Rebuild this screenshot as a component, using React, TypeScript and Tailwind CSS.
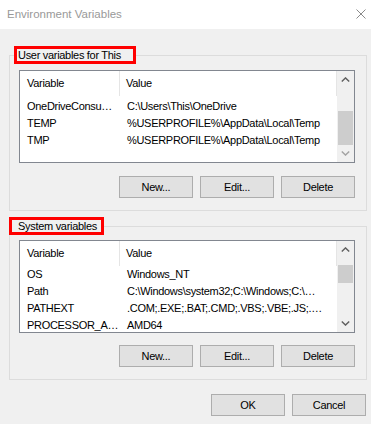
import { ReactNode } from "react"

type Row = [string, string]

const userRows: Row[] = [
    ["OneDriveConsu…", "C:\\Users\\This\\OneDrive"],
    ["TEMP", "%USERPROFILE%\\AppData\\Local\\Temp"],
    ["TMP", "%USERPROFILE%\\AppData\\Local\\Temp"],
]

const systemRows: Row[] = [
    ["OS", "Windows_NT"],
    ["Path", "C:\\Windows\\system32;C:\\Windows;C:\\…"],
    ["PATHEXT", ".COM;.EXE;.BAT;.CMD;.VBS;.VBE;.JS;.…"],
    ["PROCESSOR_A…", "AMD64"],
]

const Chevron = ({ down, light }: { down?: boolean; light?: boolean }) => (
    <svg width="9" height="5" viewBox="0 0 9 5" className={down ? "rotate-180" : ""}>
        <path d="M0.8 4.5 L4.5 0.9 L8.2 4.5" fill="none" stroke={light ? "#a3a3a3" : "#606060"} strokeWidth="1.4" />
    </svg>
)

const Scrollbar = ({ thumbTop, thumbHeight, atBottom }: { thumbTop: string; thumbHeight: string; atBottom?: boolean }) => (
    <div className="flex w-[17px] shrink-0 flex-col bg-[#f0f0f0]">
        <div className="flex h-[17px] items-center justify-center">
            <Chevron />
        </div>
        <div className="flex-1 px-[1px]">
            <div className={`${thumbTop} ${thumbHeight} bg-[#cdcdcd]`} />
        </div>
        <div className="flex h-[17px] items-center justify-center">
            <Chevron down light={atBottom} />
        </div>
    </div>
)

const ListView = ({ rows, children, offset }: { rows: Row[]; children: ReactNode; offset?: string }) => (
    <div className="flex h-[93px] overflow-hidden border border-[#828790] bg-white">
        <div className="flex min-w-0 flex-1 flex-col">
            <div className="flex h-[25px] shrink-0">
                <div className="flex w-[100px] items-center border-r border-[#e5e5e5] pl-[7px]">Variable</div>
                <div className="flex flex-1 items-center border-r border-[#e5e5e5] pl-[6px]">Value</div>
            </div>
            <div className={offset}>
                {rows.map(([name, value]) => (
                    <div key={name} className="flex h-[17px] items-center">
                        <div className="w-[100px] shrink-0 whitespace-nowrap pl-[7px]">{name}</div>
                        <div className="min-w-0 flex-1 truncate pl-[7px]">{value}</div>
                    </div>
                ))}
            </div>
        </div>
        {children}
    </div>
)

const Button = ({ label }: { label: string }) => (
    <button className="h-[22px] w-[74px] border border-[#adadad] bg-[#e1e1e1] text-black">{label}</button>
)

const GroupBox = ({ title, legendClass, children }: { title: string; legendClass: string; children: ReactNode }) => (
    <fieldset className="border border-[#dcdcdc]">
        <legend className={`h-[18px] whitespace-nowrap border-[3px] border-[#ff0000] leading-[12px] ${legendClass}`}>
            {title}
        </legend>
        {children}
    </fieldset>
)

const Actions = ({ top }: { top: string }) => (
    <div className={`${top} flex justify-end gap-[7px]`}>
        <Button label="New..." />
        <Button label="Edit..." />
        <Button label="Delete" />
    </div>
)

export default function App() {
    return (
        <div className="flex h-[424px] w-[371px] flex-col bg-[#f0f0f0] font-['Liberation_Sans',Arial,sans-serif] text-[11px] tracking-[-0.3px] text-black">
            <div className="flex h-[29px] shrink-0 items-center justify-between bg-white pl-[7px] pr-[5px]">
                <span className="text-[11.5px] tracking-normal text-[#999999]">Environment Variables</span>
                <svg width="10" height="10" viewBox="0 0 10 10" className="mb-[1px]">
                    <path d="M0.5 0.5 L9.5 9.5 M9.5 0.5 L0.5 9.5" stroke="#8a8a8a" strokeWidth="1" />
                </svg>
            </div>
            <div className="flex flex-col pl-[9px] pr-[4px] pt-[17px]">
                <GroupBox title="User variables for This" legendClass="ml-[4px] w-[122px] pl-[1px]">
                    <div className="pb-[12px] pl-[9px] pr-[11px] pt-[6px]">
                        <ListView rows={userRows} offset="pt-[2px]">
                            <Scrollbar thumbTop="mt-[23px]" thumbHeight="h-[34px]" atBottom />
                        </ListView>
                        <Actions top="mt-[13px]" />
                    </div>
                </GroupBox>
                <div className="mt-[6px]">
                    <GroupBox title="System variables" legendClass="-ml-[1px] w-[95px] pl-[6px]">
                        <div className="pb-[12px] pl-[9px] pr-[11px] pt-[5px]">
                            <ListView rows={systemRows}>
                                <Scrollbar thumbTop="mt-[7px]" thumbHeight="h-[18px]" />
                            </ListView>
                            <Actions top="mt-[12px]" />
                        </div>
                    </GroupBox>
                </div>
                <div className="mt-[14px] flex justify-end gap-[7px] pr-[1px]">
                    <Button label="OK" />
                    <Button label="Cancel" />
                </div>
            </div>
        </div>
    )
}
